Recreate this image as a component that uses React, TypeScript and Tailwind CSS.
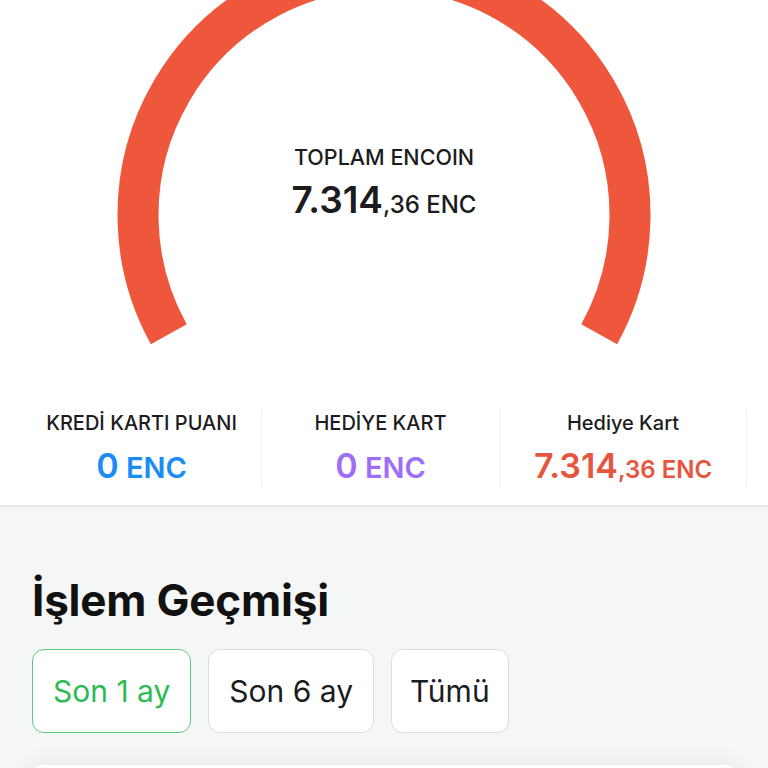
import React from "react";

const font = { fontFamily: "Inter, 'Noto Sans', sans-serif" };

function Gauge() {
    // arc from 151deg to 29deg through the top, center (384,215), r 246
    return (
        <svg className="absolute inset-0" width="768" height="390" viewBox="0 0 768 390">
            <path
                d="M 168.8 334.3 A 246 246 0 1 1 599.2 334.3"
                fill="none"
                stroke="#ee573b"
                strokeWidth="41"
            />
        </svg>
    );
}

function Stat({ label, whole, frac, color, width }: { label: string; whole: string; frac?: string; color: string; width: string }) {
    return (
        <div className={`${width} shrink-0 flex flex-col items-center justify-center h-[76px] border-r border-[#f1f1f1]`}>
            <div className="text-[20px] font-medium text-[#1c1c1e] leading-none">{label}</div>
            <div className={`mt-[16px] leading-none font-semibold ${color}`}>
                <span className="text-[34px]">{whole}</span>
                {frac ? (
                    <span className="text-[24px]">{frac} ENC</span>
                ) : (
                    <span className="text-[29px]"> ENC</span>
                )}
            </div>
        </div>
    );
}

export default function App() {
    return (
        <div className="w-[768px] h-[768px] overflow-hidden bg-[#f5f6f6]" style={font}>
            <div className="bg-white border-b-2 border-[#e6e7e7]">
                <div className="relative h-[390px]">
                    <Gauge />
                    <div className="relative flex flex-col items-center pt-[147px] text-[#1c1c1e]">
                        <div className="text-[21.5px] font-medium leading-none">TOPLAM ENCOIN</div>
                        <div className="mt-[12px] leading-none font-semibold">
                            <span className="text-[37px]">7.314</span>
                            <span className="text-[24px] font-medium">,36 ENC</span>
                        </div>
                    </div>
                </div>
                <div className="flex pl-[22px] pb-[19px] pt-[20px] items-center">
                    <Stat label="KREDİ KARTI PUANI" whole="0" color="text-[#1a8cf5]" width="w-[240px]" />
                    <Stat label="HEDİYE KART" whole="0" color="text-[#a06ef5]" width="w-[238px]" />
                    <Stat label="Hediye Kart" whole="7.314" frac=",36" color="text-[#e8553e]" width="w-[247px]" />
                </div>
            </div>
            <div className="px-[32px] pt-[71px]">
                <h2 className="text-[44px] font-bold text-[#111] leading-none tracking-[-0.2px]">İşlem Geçmişi</h2>
                <div className="flex gap-[17px] mt-[27px]">
                    <button className="h-[84px] px-[20px] rounded-[12px] bg-white border border-[#5ec97d] text-[#2cbb53] text-[30px]">Son 1 ay</button>
                    <button className="h-[84px] px-[20px] rounded-[12px] bg-white border border-[#dcdcdc] text-[#1c1c1e] text-[30px]">Son 6 ay</button>
                    <button className="h-[84px] px-[18px] rounded-[12px] bg-white border border-[#dcdcdc] text-[#1c1c1e] text-[30px]">Tümü</button>
                </div>
                <div className="mt-[32px] -mx-[2px] h-[60px] bg-white rounded-[12px] shadow-[0_0_24px_rgba(0,0,0,0.08)]" />
            </div>
        </div>
    );
}
